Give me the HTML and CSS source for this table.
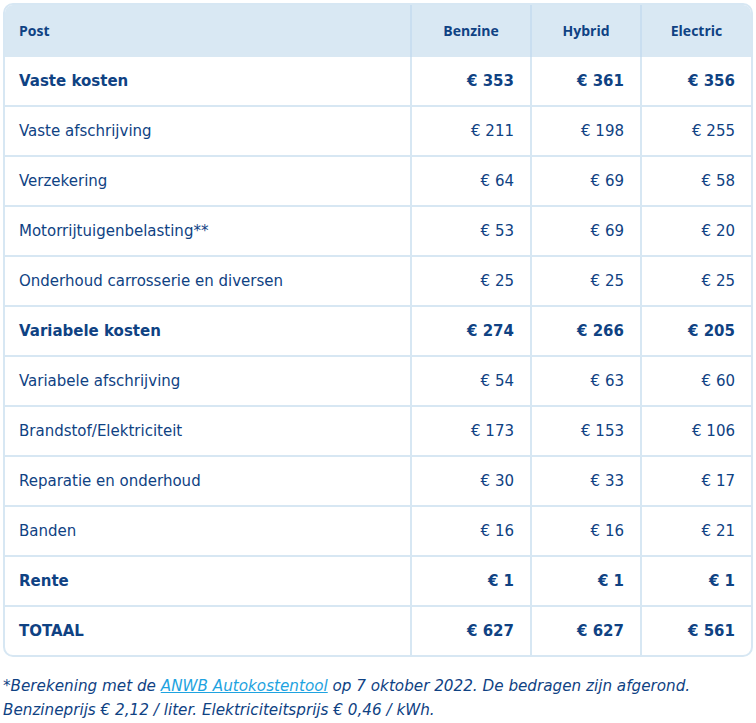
FILE: index.html
```html
<!DOCTYPE html>
<html lang="nl">
<head>
<meta charset="utf-8">
<link rel="stylesheet" href="styles.css">
</head>
<body>
<div class="wrap">
  <table class="costs">
    <colgroup>
      <col class="c-post"><col class="c-b"><col class="c-h"><col class="c-e">
    </colgroup>
    <thead>
      <tr><th class="left">Post</th><th>Benzine</th><th>Hybrid</th><th>Electric</th></tr>
    </thead>
    <tbody>
      <tr class="bold"><td>Vaste kosten</td><td>€ 353</td><td>€ 361</td><td>€ 356</td></tr>
      <tr><td>Vaste afschrijving</td><td>€ 211</td><td>€ 198</td><td>€ 255</td></tr>
      <tr><td>Verzekering</td><td>€ 64</td><td>€ 69</td><td>€ 58</td></tr>
      <tr><td>Motorrijtuigenbelasting**</td><td>€ 53</td><td>€ 69</td><td>€ 20</td></tr>
      <tr><td>Onderhoud carrosserie en diversen</td><td>€ 25</td><td>€ 25</td><td>€ 25</td></tr>
      <tr class="bold"><td>Variabele kosten</td><td>€ 274</td><td>€ 266</td><td>€ 205</td></tr>
      <tr><td>Variabele afschrijving</td><td>€ 54</td><td>€ 63</td><td>€ 60</td></tr>
      <tr><td>Brandstof/Elektriciteit</td><td>€ 173</td><td>€ 153</td><td>€ 106</td></tr>
      <tr><td>Reparatie en onderhoud</td><td>€ 30</td><td>€ 33</td><td>€ 17</td></tr>
      <tr><td>Banden</td><td>€ 16</td><td>€ 16</td><td>€ 21</td></tr>
      <tr class="bold"><td>Rente</td><td>€ 1</td><td>€ 1</td><td>€ 1</td></tr>
      <tr class="bold"><td>TOTAAL</td><td>€ 627</td><td>€ 627</td><td>€ 561</td></tr>
    </tbody>
  </table>
  <p class="note">*Berekening met de <a href="#">ANWB Autokostentool</a> op 7 oktober 2022. De bedragen zijn afgerond. Benzineprijs € 2,12 / liter. Elektriciteitsprijs € 0,46 / kWh.</p>
</div>
</body>
</html>
```
FILE: styles.css
```css
html, body {
  margin: 0;
  padding: 0;
  background: #ffffff;
}
.wrap {
  padding: 3px 3px 0 3px;
  font-family: "DejaVu Sans", Verdana, sans-serif;
  color: #0f4283;
}
.costs {
  width: 750px;
  border-collapse: separate;
  border-spacing: 0;
  border: 2px solid #d7e7f3;
  border-radius: 10px;
  overflow: hidden;
  table-layout: fixed;
}
.c-post { width: 405px; }
.c-b { width: 120px; }
.c-h { width: 110px; }
.c-e { width: 111px; }
.costs th {
  background: #d9e8f3;
  font-family: "Open Sans", sans-serif;
  font-weight: 700;
  font-size: 14px;
  height: 52px;
  padding: 0 8px 2px 8px;
  box-sizing: border-box;
  text-align: center;
  color: #0f4283;
  border-left: 2px solid #c9def0;
}
.costs th.left {
  text-align: left;
  padding-left: 14px;
  border-left: none;
}
.costs td {
  font-size: 15px;
  height: 48px;
  padding: 0 16px 0 8px;
  text-align: right;
  border-top: 2px solid #d7e7f3;
  border-left: 2px solid #d7e7f3;
}
.costs td:first-child {
  text-align: left;
  padding-left: 14px;
  border-left: none;
}
.costs thead + tbody tr:first-child td {
  border-top: none;
}
.costs tr.bold td {
  font-weight: 700;
}
.note {
  margin: 17px 0 0 0;
  font-style: italic;
  font-size: 15.2px;
  line-height: 24px;
  color: #0f4283;
}
.note a {
  color: #1ea3e0;
  text-decoration: underline;
}
```
